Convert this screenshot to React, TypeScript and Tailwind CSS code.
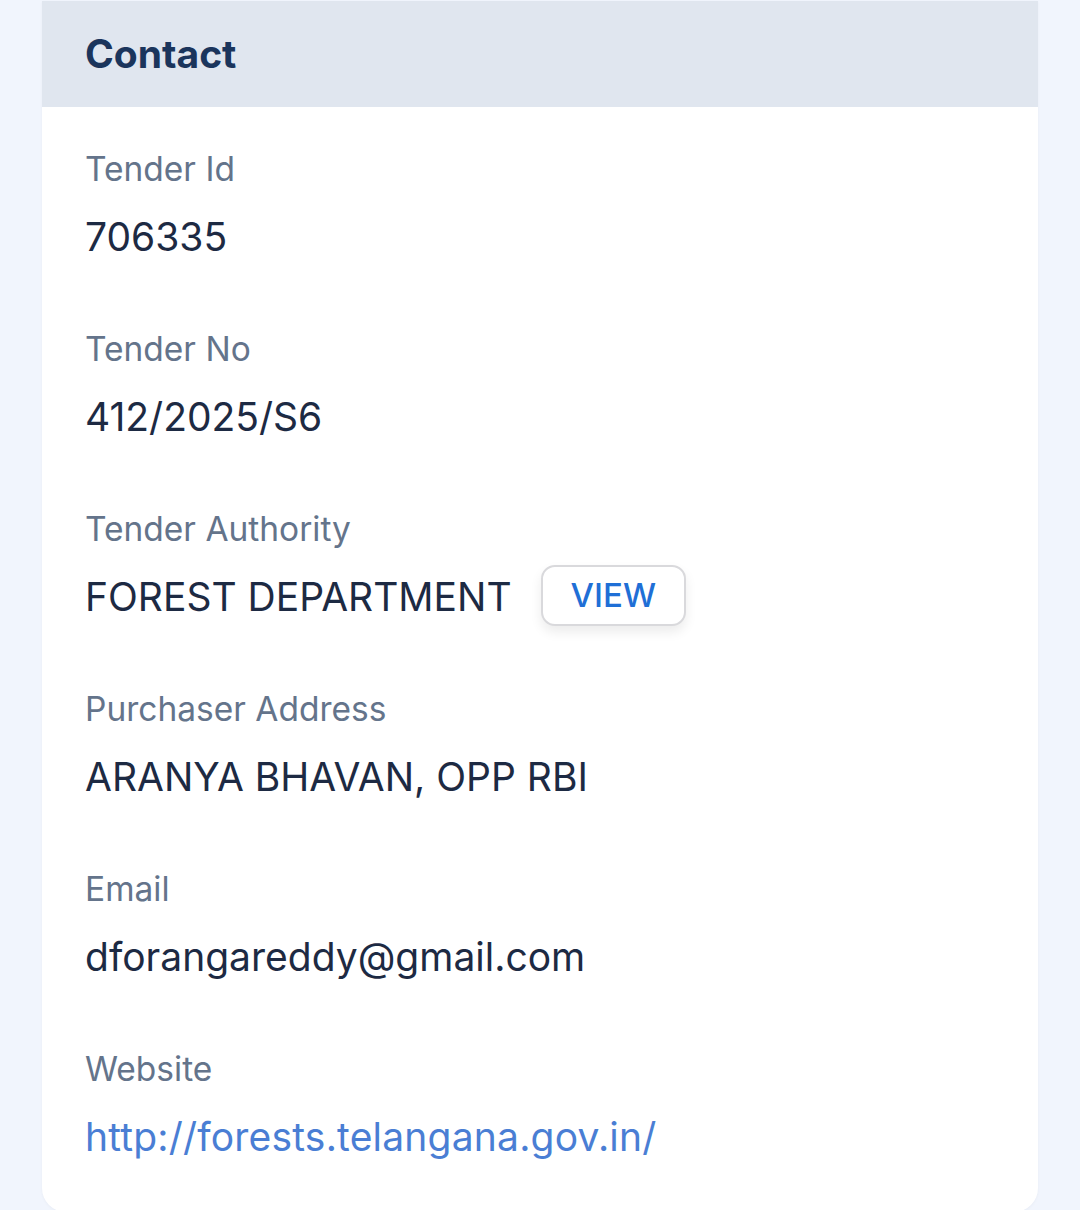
export default function App() {
  const rows: { label: string; value: string; kind?: 'view' | 'link' }[] = [
    { label: 'Tender Id', value: '706335' },
    { label: 'Tender No', value: '412/2025/S6' },
    { label: 'Tender Authority', value: 'FOREST DEPARTMENT', kind: 'view' },
    { label: 'Purchaser Address', value: 'ARANYA BHAVAN, OPP RBI' },
    { label: 'Email', value: 'dforangareddy@gmail.com' },
    { label: 'Website', value: 'http://forests.telangana.gov.in/', kind: 'link' },
  ];

  return (
    <div className="min-h-[1210px] bg-[#f1f5fd] pt-px" style={{ fontFamily: 'Inter, "Noto Sans", sans-serif' }}>
      <div className="mx-[42px] bg-white rounded-b-[24px] shadow-[0_1px_3px_rgba(15,23,42,0.04)] overflow-hidden">
        {/* Header */}
        <div className="h-[106px] bg-[#e0e6ef] px-[43px] flex items-center">
          <h2 className="text-[39px] font-bold text-[#1b355c]">Contact</h2>
        </div>

        {/* Details */}
        <div className="px-[43px] pt-[40px] pb-[51px] flex flex-col gap-[66px]">
          {rows.map(r => (
            <div key={r.label} className="flex flex-col gap-[22px]">
              <div className="h-[44px] leading-[44px] text-[33.5px] text-[#64748b]">{r.label}</div>
              <div className="h-[48px] flex items-center">
                {r.kind === 'link' ? (
                  <a className="text-[39px] text-[#4a7ed4] leading-[48px] tracking-[0.2px]">{r.value}</a>
                ) : (
                  <span className="text-[39px] text-[#1d2a43] leading-[48px]">{r.value}</span>
                )}
                {r.kind === 'view' && (
                  <button className="ml-[29px] h-[61px] px-[28px] rounded-[14px] border-2 border-[#d9d9dc] bg-white text-[33px] font-medium text-[#1f6fd6] shadow-[0_6px_12px_rgba(0,0,0,0.08)] -mt-[3px]">
                    VIEW
                  </button>
                )}
              </div>
            </div>
          ))}
        </div>
      </div>
    </div>
  );
}
